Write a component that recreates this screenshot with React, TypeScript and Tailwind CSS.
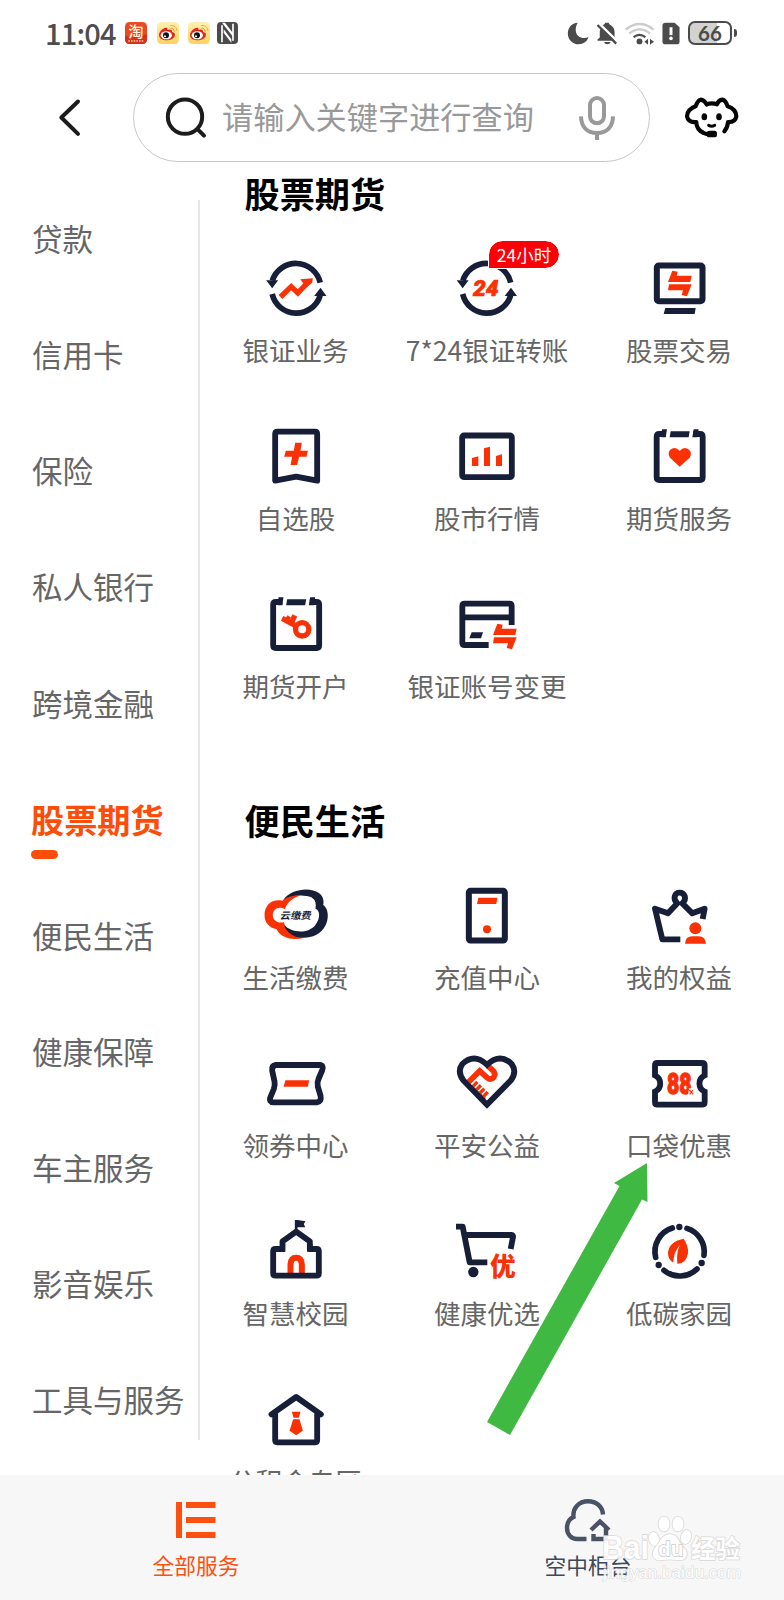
import React from "react";

const NAVY = "#171e38";
const RED = "#fb3106";
const CJK = "'Noto Sans CJK SC', sans-serif";

function Glyph({ box, children }: { box: string; children: React.ReactNode }) {
  return (
    <svg viewBox={box} className="block h-16 w-16 overflow-visible" fill="none">
      {children}
    </svg>
  );
}

/* ---------- status bar ---------- */

function TaobaoIcon() {
  return (
    <svg viewBox="0 0 66 66" className="h-[22px] w-[22px]">
      <rect width="66" height="66" rx="14" fill="#e94a22" />
      <path d="M0 40 Q20 52 66 36 V52 Q66 66 52 66 H14 Q0 66 0 52Z" fill="#d8301c" />
      <text x="33" y="45" textAnchor="middle" fontSize="46" fontWeight="500" fill="#fff3dc" fontFamily={CJK}>淘</text>
      <path d="M10 57 H56" stroke="#f8c9a4" strokeWidth="5" strokeDasharray="5 3" />
    </svg>
  );
}

function WeiboIcon() {
  return (
    <svg viewBox="0 0 66 66" className="h-[22px] w-[22px]">
      <defs>
        <linearGradient id="wb" x1="0" y1="0" x2="0" y2="1">
          <stop offset="0" stopColor="#fff0b4" />
          <stop offset="1" stopColor="#fdd35c" />
        </linearGradient>
      </defs>
      <rect width="66" height="66" rx="14" fill="url(#wb)" />
      <path d="M6 39 C6 28 20 16 28 17 C32 18 32 21 31 24 C38 21 46 22 45 30 C54 32 55 37 53 42 C48 59 6 60 6 39Z" fill="#e1251b" />
      <ellipse cx="28" cy="40" rx="17" ry="12" fill="#fff" />
      <circle cx="27" cy="40" r="9" fill="#111" />
      <circle cx="24" cy="43" r="3" fill="#fff" />
      <path d="M40 19 Q50 17 52 29" stroke="#f29a1f" strokeWidth="3" fill="none" />
      <path d="M39 11 Q58 7 60 27" stroke="#f6b045" strokeWidth="3" fill="none" />
    </svg>
  );
}

function NfcIcon() {
  return (
    <svg viewBox="0 0 63 66" className="h-[22px] w-[21px]">
      <rect width="63" height="66" rx="12" fill="#4b4b4b" />
      <path d="M15 10 V61 M48 5 V56" stroke="#fff" strokeWidth="5" />
      <path d="M15 2 L24 2 L48 34 V44Z M20 22 L43 52 V62 L20 32Z" fill="#fff" />
    </svg>
  );
}

function StatusBar() {
  return (
    <div className="flex h-[73px] shrink-0 items-start pt-[22px]">
      <div className="-mt-[11px] ml-[45px] w-[80px] font-['Noto_Sans_CJK_SC',sans-serif] text-[29px] leading-[42px] font-medium tracking-[-0.8px] whitespace-nowrap text-[#4d4d4d]">11:04</div>
      <TaobaoIcon />
      <div className="ml-[10px]"><WeiboIcon /></div>
      <div className="ml-[9px]"><WeiboIcon /></div>
      <div className="ml-[7px]"><NfcIcon /></div>
      <svg viewBox="525 64 66 70" className="ml-[329px] h-[23px] w-[22px]" fill="#4b4b4b">
        <path d="M557 66 C539 66 527 82 527 99 C527 118 542 132 560 132 C575 132 586 123 590 110 C574 117 551 110 551 88 C551 79 554 71 557 66Z" />
      </svg>
      <svg viewBox="612 64 66 70" className="ml-[7px] h-[23px] w-[22px]">
        <path d="M630 82 L670 121 H616 V117 L623 111 V91 Q625 84 630 82Z" fill="#4b4b4b" />
        <path d="M632 74 Q638 71 640 66 H650 Q652 72 658 75 Q667 81 668 94 V110Z" fill="#4b4b4b" />
        <path d="M636 125 H656 Q654 132 646 132 Q638 132 636 125Z" fill="#4b4b4b" />
        <path d="M622 71 L676 124" stroke="#fff" strokeWidth="5" />
        <path d="M616 73 L673 130" stroke="#4b4b4b" strokeWidth="7" />
      </svg>
      <svg viewBox="696 64 92 70" className="ml-[6px] h-[23px] w-[31px]" fill="none">
        <path d="M700 87 Q742 53 785 87" stroke="#ccc" strokeWidth="7" />
        <path d="M711 99 Q742 74 774 99" stroke="#ccc" strokeWidth="7" />
        <path d="M724 110 Q742 96 760 110" stroke="#4b4b4b" strokeWidth="7" />
        <circle cx="742" cy="123" r="9" fill="#4b4b4b" />
        <path d="M768 115 V133 L757 124Z M774 115 V133 L786 124Z" fill="#4b4b4b" />
      </svg>
      <svg viewBox="810 64 54 70" className="ml-[7px] h-[23px] w-[18px]">
        <path d="M820 66 H848 L863 80 V124 Q863 132 854 132 H820 Q811 132 811 123 V75 Q811 66 820 66Z" fill="#4b4b4b" />
        <path d="M837 80 V104" stroke="#fff" strokeWidth="9" />
        <circle cx="837" cy="114" r="5.5" fill="#fff" />
      </svg>
      <div className="-mt-px ml-[8px] flex h-6 w-11 items-center justify-center rounded-[7px] border-2 border-[#4b4b4b] bg-linear-to-r from-[#d2d2d2] from-68% to-white to-68% font-['Lato','Noto_Sans',sans-serif] text-[20.5px] leading-none font-bold text-[#4b4b4b]">66</div>
      <div className="mt-[7px] ml-[2px] h-2 w-[3px] rounded-r bg-[#4b4b4b]" />
    </div>
  );
}

/* ---------- header ---------- */

function Header() {
  return (
    <div className="flex h-[89px] shrink-0 items-center">
      <svg viewBox="174 290 72 122" className="ml-[58px] h-[41px] w-6" fill="none">
        <path d="M234 303 L184 351 L234 400" stroke="#1c1c1c" strokeWidth="12" strokeLinecap="round" strokeLinejoin="round" />
      </svg>
      <div className="ml-[51px] flex h-[89px] w-[517px] items-center rounded-full border border-[#c8c8c8]">
        <svg viewBox="495 287 126 129" className="ml-[31px] h-[43px] w-[42px]" fill="none">
          <circle cx="555" cy="349" r="51.5" stroke="#1c1c1c" strokeWidth="12" />
          <path d="M594 388 L612 406" stroke="#1c1c1c" strokeWidth="12" strokeLinecap="round" />
        </svg>
        <div className="-mt-[3px] ml-[15px] w-[312px] text-[31.2px] leading-10 whitespace-nowrap text-[#999]">请输入关键字进行查询</div>
        <svg viewBox="559 282 114 138" className="ml-[44px] h-[46px] w-[38px]" fill="none" stroke="#999" strokeWidth="12">
          <rect x="595" y="291" width="42" height="76" rx="21" />
          <path d="M568 346 C569 378 586 396 616 396 C646 396 663 378 664 346 M616 396 V417" />
        </svg>
      </div>
      <svg viewBox="879 287 168 129" className="ml-[34px] h-[43px] w-14" fill="none" stroke="#050505" strokeWidth="12.5" strokeLinecap="round" strokeLinejoin="round">
        <path d="M947 312 Q962 306 978 312 Q983 299 994 298 Q1004 300 1010 318 Q1035 326 1036 348 Q1033 366 1011 365 Q1010 382 1000 393" />
        <path d="M947 312 Q940 299 929 298 Q920 300 914 318 Q889 327 888 348 Q892 368 916 365 Q916 388 938 398 Q946 402 956 402" />
        <path d="M953 375 Q962 380 971 375" strokeWidth="9" />
        <ellipse cx="940" cy="349" rx="8.5" ry="10.5" fill="#050505" stroke="none" />
        <ellipse cx="984" cy="349" rx="8.5" ry="10.5" fill="#050505" stroke="none" />
        <rect x="947" y="391" width="31" height="20" rx="8" fill="#050505" stroke="none" />
      </svg>
    </div>
  );
}

/* ---------- service glyphs ---------- */

function CycleRing({ cx }: { cx: number }) {
  return (
    <g transform={`translate(${cx - 227} 0)`}>
      <path d="M155.500 152 A74.500 74.500 0 0 1 299 158" stroke={NAVY} strokeWidth="17" />
      <path d="M299 196 A74.500 74.500 0 0 1 155 192" stroke={NAVY} strokeWidth="17" />
      <path d="M137 151 H173 L155 175Z M281 198 H318 L300 173Z" fill={NAVY} />
    </g>
  );
}

function SwapMark({ x, y }: { x: number; y: number }) {
  return (
    <g transform={`translate(${x} ${y})`} fill={RED}>
      <path d="M13 0 L29 3 L26 15 H71 L67 34 H0Z" />
      <path d="M3 41 H71 L57 77 L41 73 L45 59 H0Z" />
    </g>
  );
}

function NotepadFrame() {
  return (
    <>
      <path d="M318 612 H298 Q290 612 290 620 V742 Q290 750 298 750 H420 Q428 750 428 742 V620 Q428 612 420 612 H400" stroke={NAVY} strokeWidth="17.500" />
      <path d="M306 598 H321 L317 622 H304Z M332 604 H389 L386 622 H329Z M401 598 H416 L412 622 H397Z" fill={NAVY} />
    </>
  );
}

const icons: Record<string, React.ReactNode> = {
  cycle: (
    <Glyph box="130.500 78 192 192">
      <CycleRing cx={227} />
      <path d="M180 201 L212 170 L232 189 L262 157" stroke={RED} strokeWidth="16" />
      <path d="M239 148 L277 145 L275 158 L258 172Z" fill={RED} />
    </Glyph>
  ),
  cycle24: (
    <Glyph box="705 78 192 192">
      <CycleRing cx={800} />
      <text x="759" y="198" fontSize="66" fontWeight="900" fontStyle="italic" fill={RED} stroke={RED} strokeWidth="2" textLength="77" lengthAdjust="spacingAndGlyphs" fontFamily="Roboto, sans-serif">24</text>
    </Glyph>
  ),
  monitor: (
    <Glyph box="261 78 192 192">
      <rect x="290.500" y="106.500" width="137" height="107" rx="6" stroke={NAVY} strokeWidth="18" />
      <path d="M316 234 H407 L404 252 H311Z" fill={NAVY} />
      <SwapMark x={324} y={122} />
    </Glyph>
  ),
  bookmark: (
    <Glyph box="130.500 42 192 192">
      <path d="M171 65 H283 Q290 65 290 72 V212 L227 200 L164 212 V72 Q164 65 171 65Z" stroke={NAVY} strokeWidth="17.500" strokeLinejoin="round" />
      <path d="M224 98 H244 L240 122 H262 L258 140 H236 L230 165 H210 L215 140 H191 L196 122 H220Z" fill={RED} />
    </Glyph>
  ),
  chart: (
    <Glyph box="705 42 192 192">
      <rect x="726.500" y="76.500" width="149" height="125" rx="6" stroke={NAVY} strokeWidth="17.500" />
      <path d="M756 144 L775 139 V168 H756Z M792 115 L810 110 V168 H792Z M828 138 L846 133 V168 H828Z" fill={RED} />
    </Glyph>
  ),
  heartPad: (
    <Glyph box="261 582 192 192">
      <NotepadFrame />
      <path d="M359 710 L330 683 Q322 670 330 660 Q346 646 359 663 Q373 646 388 660 Q397 670 389 683Z" fill={RED} />
    </Glyph>
  ),
  keyPad: (
    <Glyph box="130.500 546 192 192">
      <g transform="translate(-132 -36)"><NotepadFrame /></g>
      <circle cx="245" cy="658" r="20" stroke={RED} strokeWidth="16" />
      <path d="M227 648 L185 625 M212 639 L223 616" stroke={RED} strokeWidth="16" />
      <path d="M198 632 L206 619" stroke={RED} strokeWidth="12" />
    </Glyph>
  ),
  card: (
    <Glyph box="705 546 192 192">
      <path d="M875 645 V588 Q875 581 868 581 H734 Q727 581 727 588 V698 Q727 705 734 705 H806 M727 622 H875" stroke={NAVY} strokeWidth="17.500" />
      <path d="M755 667 H789 L783 685 H748Z" fill={NAVY} />
      <SwapMark x={819} y={641} />
    </Glyph>
  ),
  cloudFee: (
    <Glyph box="130.500 279 192 192">
      <path d="M132 375 C132 345 155 326 185 332 C197 320 215 315 238 317 C214 325 200 338 193 358 C175 347 156 357 157 377 C158 392 172 400 190 397 C197 419 213 435 250 444 C215 452 180 444 168 417 C146 414 132 397 132 375Z" fill={RED} />
      <path d="M189 329 C211 296 270 290 295 309 C309 319 311 335 308 344 C326 357 325 389 314 408 C298 440 256 449 226 440 C205 432 195 419 191 406 C211 426 258 434 283 407 C302 384 298 360 285 356 C290 326 274 318 249 317 C226 315 205 318 189 329Z" fill={NAVY} />
      <text x="0" y="0" transform="translate(178 388) skewX(-12)" fontSize="29" fontWeight="700" fill={NAVY} textLength="93" lengthAdjust="spacingAndGlyphs" fontFamily={CJK}>云缴费</text>
    </Glyph>
  ),
  phone: (
    <Glyph box="705 279 192 192">
      <rect x="746.500" y="302.500" width="108" height="149" rx="5" stroke={NAVY} strokeWidth="18" />
      <path d="M775 323 H832 L829 342 H771Z" fill={RED} />
      <circle cx="801" cy="418" r="12" fill={RED} />
    </Glyph>
  ),
  crown: (
    <Glyph box="261 39 192 192">
      <path d="M361 208 H307 L285 116 L324 130 L352 100 C337 86 344 68 359 68 C374 68 382 86 367 100 L397 130 L434 116 L428 147" stroke={NAVY} strokeWidth="17.500" strokeLinejoin="round" />
      <circle cx="406" cy="175" r="18" fill={RED} />
      <path d="M375 221 Q376 199 397 199 H416 Q436 199 438 221Z" fill={RED} />
    </Glyph>
  ),
  coupon: (
    <Glyph box="130.500 63 192 192">
      <path d="M166 105 H297 Q311 106 305 121 L294 147 Q289 158 292 170 L300 197 Q304 215 289 217 H160 Q144 216 150 201 L160 177 Q164 165 162 154 L155 122 Q153 107 166 105Z" stroke={NAVY} strokeWidth="17.500" strokeLinejoin="round" />
      <path d="M195 151 H266 L262 170 H189Z" fill={RED} />
    </Glyph>
  ),
  charity: (
    <Glyph box="705 63 192 192">
      <path d="M746 156 L779 123 L801 143 Q812 152 821 142 Q828 132 820 123 L803 107" stroke={RED} strokeWidth="17" strokeLinejoin="miter" />
      <path d="M762 159 L801 197" stroke={RED} strokeWidth="19" strokeDasharray="10 4.500" />
      <path d="M752 168 L795 207" stroke={RED} strokeWidth="9" />
      <path d="M801 224 L731 152 Q710 125 727 102 Q762 68 801 104 Q840 68 875 102 Q892 126 872 152Z" stroke={NAVY} strokeWidth="17.500" strokeLinejoin="miter" />
    </Glyph>
  ),
  ticket88: (
    <Glyph box="261 543 192 192">
      <path d="M292 579 H426 Q434 579 434 586 V616 A27 27 0 0 0 434 665 V697 Q434 704 426 704 H292 Q285 704 285 697 V665 A27 27 0 0 0 285 616 V586 Q285 579 292 579Z" stroke={NAVY} strokeWidth="17.500" />
      <text x="321" y="672" fontSize="88" fontWeight="900" fill={RED} stroke={RED} strokeWidth="4" textLength="74" lengthAdjust="spacingAndGlyphs" fontFamily="Roboto, sans-serif">88</text>
      <path d="M387 655 H403 V678 H384Z" fill="#fff" />
      <path d="M388 660 L400 673 M399 660 L389 673" stroke={RED} strokeWidth="3.500" />
    </Glyph>
  ),
  school: (
    <Glyph box="130.500 57 192 192">
      <path d="M210 219 V193 Q211 173 227 173 Q243 173 244 193 V219" stroke={RED} strokeWidth="18" />
      <path d="M186 154 V124 L227 95 L268 124 V147 H288 Q295 147 295 154 V220 Q295 227 288 227 H165 Q158 227 158 220 V154 Q158 147 165 147 H194" stroke={NAVY} strokeWidth="17.500" strokeLinejoin="round" />
      <path d="M268 132 V155" stroke={NAVY} strokeWidth="17" />
      <path d="M223 60 H231 L255 64 L250 72 L254 82 H231 V92 H223Z" fill={NAVY} />
    </Glyph>
  ),
  cart: (
    <Glyph box="705 57 192 192">
      <path d="M708 80 H728 L749 187 H802 M737 105 H875 Q880 105 879 111 L872 147" stroke={NAVY} strokeWidth="17.500" strokeLinejoin="round" />
      <circle cx="760" cy="216" r="15.500" fill={NAVY} />
      <text x="810" y="227" fontSize="77" fontWeight="900" fill={RED} fontFamily={CJK}>优</text>
    </Glyph>
  ),
  leaf: (
    <Glyph box="561 237 192 192">
      <g stroke={NAVY} strokeWidth="17" strokeLinecap="round">
        <path d="M637 264 A74 74 0 0 0 587 352" />
        <path d="M681 265 A74 74 0 0 1 732 346" />
        <path d="M612 391 A74 74 0 0 0 711 387" />
      </g>
      <g fill={NAVY}>
        <circle cx="658" cy="261" r="9.500" />
        <circle cx="596" cy="375" r="9.500" />
        <circle cx="725" cy="369" r="9.500" />
      </g>
      <path d="M671 296 Q625 305 624 340 Q624 359 640 368 Q641 334 660 315 Q648 338 652 371 Q678 372 684 340 Q686 318 671 296Z" fill={RED} />
    </Glyph>
  ),
  house: (
    <Glyph box="130.500 561 192 192">
      <path d="M153 643 L227 591 L301 643" stroke={NAVY} strokeWidth="17.500" strokeLinecap="round" strokeLinejoin="round" />
      <path d="M164 640 V721 Q164 727 170 727 H284 Q290 727 290 721 V640" stroke={NAVY} strokeWidth="17.500" />
      <path d="M214 635 H240 L235 653 H219Z M218 658 H237 L247 692 L227 706 L207 692Z" fill={RED} />
    </Glyph>
  ),
};

type Service = { icon: string; label: string; badge?: string };

const stockServices: Service[] = [
  { icon: "cycle", label: "银证业务" },
  { icon: "cycle24", label: "7*24银证转账", badge: "24小时" },
  { icon: "monitor", label: "股票交易" },
  { icon: "bookmark", label: "自选股" },
  { icon: "chart", label: "股市行情" },
  { icon: "heartPad", label: "期货服务" },
  { icon: "keyPad", label: "期货开户" },
  { icon: "card", label: "银证账号变更" },
];

const lifeServices: Service[] = [
  { icon: "cloudFee", label: "生活缴费" },
  { icon: "phone", label: "充值中心" },
  { icon: "crown", label: "我的权益" },
  { icon: "coupon", label: "领券中心" },
  { icon: "charity", label: "平安公益" },
  { icon: "ticket88", label: "口袋优惠" },
  { icon: "school", label: "智慧校园" },
  { icon: "cart", label: "健康优选" },
  { icon: "leaf", label: "低碳家园" },
  { icon: "house", label: "公积金专区" },
];

function ServiceSection({ title, items }: { title: string; items: Service[] }) {
  return (
    <section>
      <h2 className="pl-[44.500px] text-[35.200px] leading-[50px] font-bold text-black">{title}</h2>
      <div className="mt-[38px] grid grid-cols-[191px_192px_192px]">
        {items.map((s) => (
          <div key={s.label} className="flex h-[168px] flex-col items-center">
            <div className="relative">
              {icons[s.icon]}
              {s.badge && (
                <span className="absolute -top-[15px] left-[34px] flex h-[27px] w-[70px] items-center justify-center rounded-[14px] rounded-bl-none bg-[#fb0007] text-[17.500px] leading-none whitespace-nowrap text-white outline outline-white">
                  {s.badge}
                </span>
              )}
            </div>
            <div className="mt-[10px] text-[26.500px] leading-10 whitespace-nowrap text-[#666]">{s.label}</div>
          </div>
        ))}
      </div>
    </section>
  );
}

/* ---------- sidebar ---------- */

const categories = ["贷款", "信用卡", "保险", "私人银行", "跨境金融", "股票期货", "便民生活", "健康保障", "车主服务", "影音娱乐", "工具与服务"];

function Sidebar({ active }: { active: string }) {
  return (
    <nav className="w-[198px] shrink-0 pt-[19px] pl-[31px]">
      {categories.map((c) =>
        c === active ? (
          <div key={c} className="flex h-[116.100px] flex-col pt-[33px] text-[33.200px] leading-[50px] font-bold whitespace-nowrap text-[#fc4e08]">
            {c}
            <div className="mt-[6px] h-[9px] w-[27px] rounded-full bg-[#fc4e08]" />
          </div>
        ) : (
          <div key={c} className="flex h-[116.100px] items-center pl-px text-[30.500px] whitespace-nowrap text-[#666]">{c}</div>
        )
      )}
    </nav>
  );
}

/* ---------- bottom tabs ---------- */

function TabBar() {
  return (
    <div className="flex h-[125px] shrink-0 bg-[#f7f7f7] text-[21.700px] leading-8">
      <div className="flex w-[392px] flex-col items-center pt-[27px] text-[#fb5010]">
        <svg viewBox="0 0 40 36" className="h-9 w-10" fill="#fb5010">
          <path d="M0 0H6V36H0Z M10 0H39.500V6H10Z M10 15H39.500V21H10Z M10 30H39.500V36H10Z" />
        </svg>
        <div className="mt-[11px]">全部服务</div>
      </div>
      <div className="flex w-[392px] flex-col items-center pt-[22px] text-[#3f485b]">
        <svg viewBox="0 0 50 46" className="h-[46px] w-[50px]" fill="none" stroke="#4a5366" strokeWidth="4.400">
          <path d="M40 17.500 C39.500 9 33 4.300 25 4.300 C16 4.300 9.500 11 10.500 20 C6 22 4 26 4 31 C4 37.500 8.500 42 14 42 H23.500" />
          <path d="M28 33 L37 24.500 L46 33 M43 31 V42 H30.500 V37" />
        </svg>
        <div className="mt-[6px]">空中柜台</div>
      </div>
    </div>
  );
}

function Watermark() {
  return (
    <svg viewBox="0 0 150 80" className="absolute top-[1510px] left-[598px] h-20 w-[150px]" fill="#fff" stroke="#d4d4d4" strokeWidth="1.500" opacity="0.9" paintOrder="stroke">
      <text x="4" y="49" fontSize="33" fontWeight="700" textLength="47" lengthAdjust="spacingAndGlyphs" fontFamily="'Liberation Sans', sans-serif">Bai</text>
      <ellipse cx="56" cy="29" rx="5" ry="7" transform="rotate(-15 56 29)" />
      <ellipse cx="66" cy="14" rx="5.500" ry="7.500" />
      <ellipse cx="80" cy="14" rx="5.500" ry="7.500" />
      <ellipse cx="88" cy="27" rx="5" ry="7" transform="rotate(15 88 27)" />
      <path d="M72 24 C62 25 62 33 57 38 C51 47 58 52 65 50 Q72 49 79 50 C88 52 92 44 86 38 C80 32 81 25 72 24Z" />
      <text x="60" y="46" fontSize="21" fontWeight="700" stroke="#c8c8c8" fontFamily="'Liberation Sans', sans-serif">du</text>
      <text x="93" y="48" fontSize="24.500" fontWeight="700" fontFamily={CJK}>经验</text>
      <text x="5" y="68" fontSize="16" strokeWidth="1" textLength="138" lengthAdjust="spacingAndGlyphs" fontFamily="'Liberation Sans', sans-serif">jingyan.baidu.com</text>
    </svg>
  );
}

export default function App() {
  return (
    <div className="relative flex h-[1600px] w-[784px] flex-col overflow-hidden bg-white font-['Noto_Sans_CJK_SC',sans-serif]">
      <StatusBar />
      <Header />
      <main className="flex min-h-0 flex-1 overflow-hidden">
        <Sidebar active="股票期货" />
        <div className="mt-[38px] h-[1240px] w-[2px] shrink-0 bg-[#e6e6e6]" />
        <div className="pt-[6px]">
          <ServiceSection title="股票期货" items={stockServices} />
          <div className="h-[35px]" />
          <ServiceSection title="便民生活" items={lifeServices} />
        </div>
      </main>
      <TabBar />
      <svg viewBox="0 0 164 274" className="pointer-events-none absolute top-[1162px] left-[486px] h-[274px] w-[164px]">
        <path d="M161 1 L128 21 L133.500 24 L1 260 L24 273 L156 37.500 L161.500 40Z" fill="#40b942" />
      </svg>
      <Watermark />
    </div>
  );
}
